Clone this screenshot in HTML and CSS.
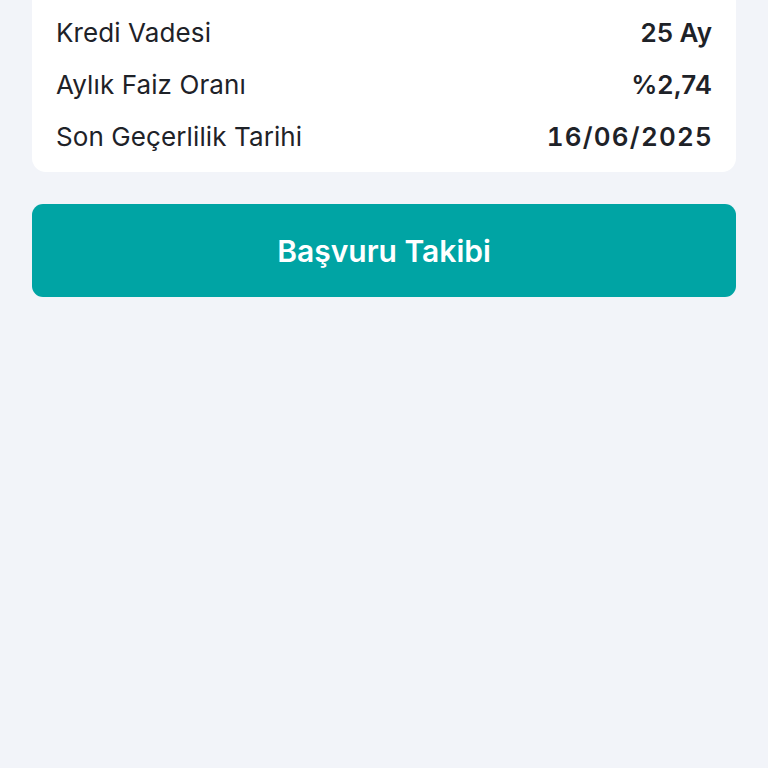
FILE: index.html
```html
<!DOCTYPE html>
<html lang="tr">
<head>
<meta charset="utf-8">
<link rel="stylesheet" href="styles.css">
</head>
<body>
<div class="page">
  <div class="card">
    <div class="row"><span class="label">Kredi Vadesi</span><span class="value">25 Ay</span></div>
    <div class="row"><span class="label">Aylık Faiz Oranı</span><span class="value">%2,74</span></div>
    <div class="row"><span class="label">Son Geçerlilik Tarihi</span><span class="value date">16/06/2025</span></div>
  </div>
  <button class="btn">Başvuru Takibi</button>
</div>
</body>
</html>
```
FILE: styles.css
```css
html, body {
  margin: 0;
  padding: 0;
  background: #f2f4f9;
  font-family: Inter, "Noto Sans", sans-serif;
  color: #1e2228;
}
.page {
  padding: 0 32px;
  display: flex;
  flex-direction: column;
  gap: 32px;
}
.card {
  background: #ffffff;
  border-radius: 0 0 14px 14px;
  padding: 6px 24px 10px;
  display: flex;
  flex-direction: column;
}
.row {
  height: 52px;
  display: flex;
  align-items: center;
  justify-content: space-between;
  font-size: 26px;
}
.label { font-weight: 400; letter-spacing: 0.1px; }
.value { font-weight: 600; }
.date {
  font-variant-numeric: tabular-nums;
  letter-spacing: 1.2px;
  margin-right: -1px;
}
.btn {
  height: 93px;
  border: none;
  border-radius: 11px;
  background: #00a4a4;
  color: #ffffff;
  font-family: Inter, "Noto Sans", sans-serif;
  font-size: 30px;
  font-weight: 600;
  padding: 0;
}
```
